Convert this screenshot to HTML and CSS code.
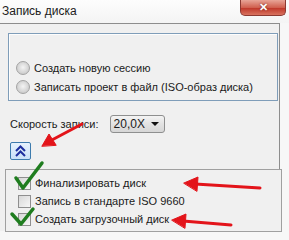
FILE: index.html
```html
<!DOCTYPE html>
<html lang="ru">
<head>
    <meta charset="UTF-8">
    <title>Запись диска</title>
    <link rel="stylesheet" href="styles.css">
</head>
<body>
    <div class="titlebar">
        <span class="title">Запись диска</span>
        <span class="close">✕</span>
    </div>

    <div class="client">
        <!-- Выбор действия -->
        <div class="group">
            <label class="row"><span class="radio"></span>Создать новую сессию</label>
            <label class="row"><span class="radio"></span>Записать проект в файл (ISO-образ диска)</label>
        </div>

        <!-- Скорость -->
        <div class="speed">
            <span>Скорость записи:</span>
            <span class="combo">20,0X<span class="caret"></span></span>
        </div>

        <div class="toggle">
            <svg width="11" height="12" viewBox="0 0 11 12">
                <path d="M1 6 L5.5 1.5 L10 6 M1 11 L5.5 6.5 L10 11" fill="none" stroke="#1d2f9e" stroke-width="2"/>
            </svg>
        </div>

        <!-- Дополнительные параметры -->
        <div class="options">
            <label class="row"><span class="check"></span>Финализировать диск</label>
            <label class="row"><span class="check"></span>Запись в стандарте ISO 9660</label>
            <label class="row"><span class="check"></span>Создать загрузочный диск</label>
        </div>
    </div>

    <!-- Пометки поверх скриншота -->
    <svg class="marks" width="289" height="240" viewBox="0 0 289 240">
        <g stroke="#e3141a" stroke-width="3" stroke-linecap="round" fill="#e3141a">
            <line x1="82" y1="124" x2="50" y2="141"/>
            <polygon points="42,146 49,134 56,145" stroke-width="1"/>
            <line x1="260" y1="188" x2="195" y2="184"/>
            <polygon points="184,183 198,177 197,191" stroke-width="1"/>
            <line x1="231" y1="225" x2="183" y2="221"/>
            <polygon points="172,220 186,214 185,228" stroke-width="1"/>
        </g>
        <g stroke="#1f7d1f" stroke-width="3.5" stroke-linecap="round" stroke-linejoin="round" fill="none">
            <polyline points="16,178 23,188 42,163"/>
            <polyline points="12,214 21,224 33,209"/>
        </g>
    </svg>
</body>
</html>
```

FILE: styles.css
```css
/* Окно */
body {
    margin: 0;
    width: 289px;
    height: 240px;
    overflow: hidden;
    background: #f7f7f7;
    font-family: 'Liberation Sans', Arial, sans-serif;
    font-size: 11px;
    color: #1a1a1a;
    position: relative;
}

.titlebar {
    height: 23px;
    display: flex;
    justify-content: space-between;
    align-items: flex-start;
    background: linear-gradient(#fdfdfd, #f4f4f4);
}

.title {
    font-size: 12px;
    padding: 4px 0 0 2px;
    color: #202020;
}

.close {
    width: 44px;
    height: 15px;
    margin-right: 3px;
    border: 1px solid #8c3a32;
    border-top: none;
    border-radius: 0 0 5px 5px;
    background: linear-gradient(#e8a597, #d0604f 50%, #c0392b 55%, #d8735f);
    color: #fff;
    font-size: 11px;
    font-weight: bold;
    text-align: center;
    line-height: 14px;
    text-shadow: 0 0 2px #6b1a12;
}

.client {
    width: 280px;
    height: 208px;
    border-top: 1px solid #8d8d8d;
    border-right: 1px solid #8d8d8d;
    background: #f0f0f0;
    padding-top: 9px;
    box-sizing: border-box;
}

/* Группа переключателей */
.group {
    margin-left: 8px;
    width: 270px;
    border: 1px solid #7f9db9;
    box-shadow: inset 1px 1px 0 #fdfdfd;
    padding: 24px 0 4px 7px;
    box-sizing: border-box;
    height: 68px;
}

.row {
    display: flex;
    align-items: center;
    height: 19px;
}

.radio {
    width: 12px;
    height: 12px;
    border-radius: 50%;
    border: 1px solid #a3a3a3;
    background: radial-gradient(circle at 50% 45%, #f4f4f4, #cfcfcf 70%);
    margin-right: 4px;
}

.speed {
    display: flex;
    align-items: center;
    height: 18px;
    margin: 14px 0 0 10px;
    gap: 5px;
}

.combo {
    position: relative;
    width: 50px;
    height: 16px;
    border: 1px solid #8e8f8f;
    border-radius: 3px;
    background: linear-gradient(#f4f4f4, #e2e2e2 50%, #d6d6d6);
    padding-left: 3px;
    line-height: 16px;
    font-size: 12px;
    margin-left: 6px;
}

.caret {
    position: absolute;
    right: 5px;
    top: 6px;
    border-left: 4px solid transparent;
    border-right: 4px solid transparent;
    border-top: 4px solid #111;
}

.toggle {
    width: 19px;
    height: 16px;
    margin: 9px 0 0 10px;
    border: 1px solid #3d7bad;
    border-radius: 2px;
    background: linear-gradient(#e6f2fd, #c9e1f8);
    display: flex;
    align-items: center;
    justify-content: center;
}

/* Флажки */
.options {
    margin: 9px 0 0 5px;
    width: 277px;
    height: 63px;
    border: 1px solid #a0a0a0;
    padding: 4px 0 0 12px;
    box-sizing: border-box;
    background: #f0f0f0;
}

.options .row {
    height: 18px;
}

.check {
    width: 11px;
    height: 11px;
    border: 1px solid #8f8f8f;
    background: linear-gradient(135deg, #d8d8d8, #f6f6f6);
    margin-right: 4px;
}

.marks {
    position: absolute;
    left: 0;
    top: 0;
    pointer-events: none;
}
```
